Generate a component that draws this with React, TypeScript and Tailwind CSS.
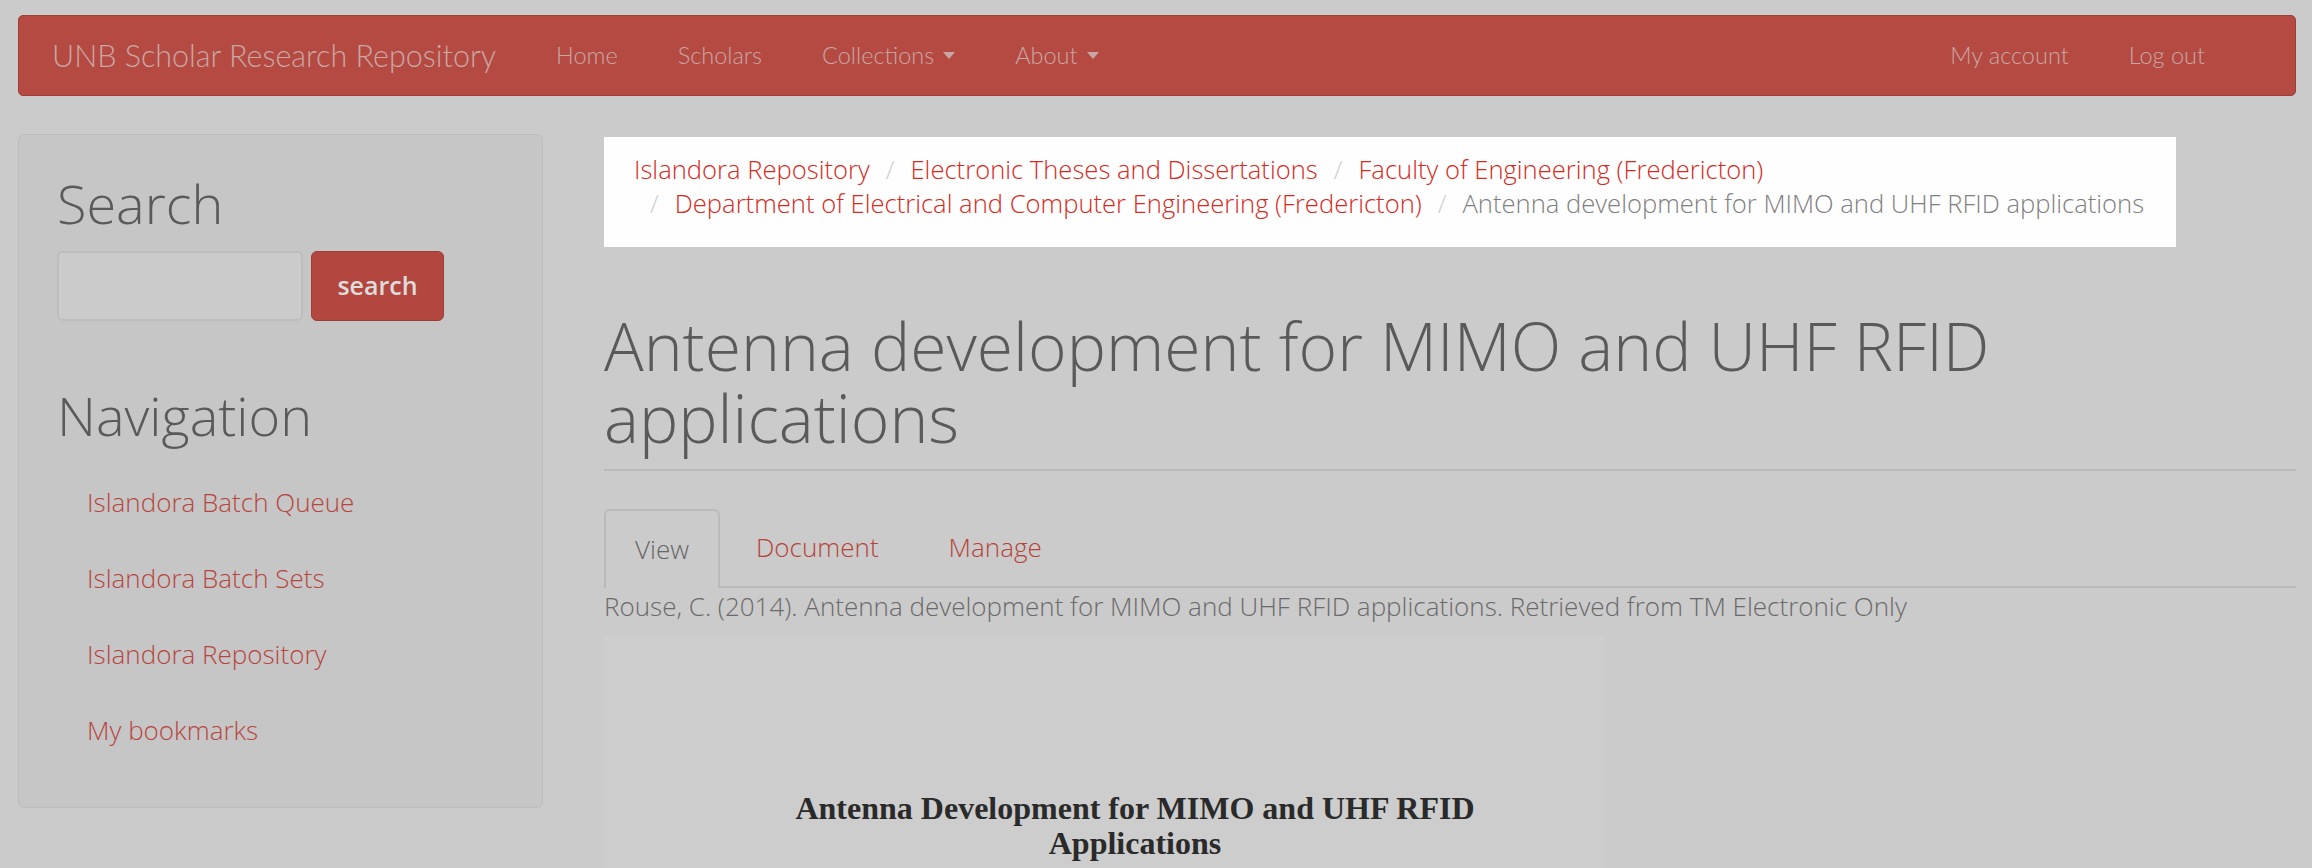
const navLinks = ['Islandora Batch Queue', 'Islandora Batch Sets', 'Islandora Repository', 'My bookmarks'];

const crumbs = [
  'Islandora Repository',
  'Electronic Theses and Dissertations',
  'Faculty of Engineering (Fredericton)',
  'Department of Electrical and Computer Engineering (Fredericton)',
];

const Caret = () => (
  <span className="ml-[9px] inline-block h-0 w-0 border-x-[6px] border-t-[7px] border-x-transparent border-t-[#c9a7a3] align-middle" />
);

export default function App() {
  return (
    <div className="h-[868px] overflow-hidden bg-[#cbcbcb] font-['Open_Sans',sans-serif]">
      {/* top bar */}
      <div className="pl-[18px] pr-[16px] pt-[15px]">
        <nav className="flex h-[81px] items-center rounded-[5px] border border-[#a03e38] bg-[#b54a43] pl-[33px] pr-[90px] font-['Lato',sans-serif] font-light text-[#c9a7a3]">
          <span className="text-[30.5px] leading-none">UNB Scholar Research Repository</span>
          <ul className="ml-[60px] flex items-center gap-[60px] text-[23.5px]">
            <li>Home</li>
            <li>Scholars</li>
            <li className="flex items-center">
              Collections
              <Caret />
            </li>
            <li className="flex items-center">
              About
              <Caret />
            </li>
          </ul>
          <ul className="ml-auto flex items-center gap-[60px] text-[23.5px]">
            <li>My account</li>
            <li>Log out</li>
          </ul>
        </nav>
      </div>

      <div className="flex items-start gap-[61px] pl-[18px] pr-[16px] pt-[38px]">
        {/* sidebar */}
        <aside className="w-[525px] shrink-0 rounded-[6px] border border-[#bdbdbd] bg-[#c6c6c6] pb-[39px] pl-[38px] pr-[30px] pt-[37px]">
          <h2 className="text-[54px] font-light leading-[62px] text-[#5a5a5a]">Search</h2>
          <div className="mt-[17px] flex gap-[8px]">
            <div className="h-[70px] w-[246px] rounded-[6px] border-2 border-[#bdbdbd] bg-[#cbcbcb]" />
            <button className="h-[70px] w-[133px] rounded-[6px] border border-[#9e3d37] bg-[#b3473f] text-[25px] font-semibold text-[#dcdcdc]">
              search
            </button>
          </div>
          <h2 className="mt-[63px] text-[54px] font-light leading-[62px] text-[#5a5a5a]">Navigation</h2>
          <ul className="mt-[18px]">
            {navLinks.map((l) => (
              <li key={l} className="py-[20px] pl-[30px] text-[26px] font-light leading-[36px] text-[#b8453e]">
                {l}
              </li>
            ))}
          </ul>
        </aside>

        {/* content */}
        <main className="min-w-0 flex-1">
          <ol className="mt-[3px] flex w-[1572px] flex-wrap bg-[#fefefe] pb-[26px] pl-[30px] pt-[16px] text-[25.6px] font-light leading-[34px]">
            {crumbs.map((c, i) => (
              <li key={c} className="flex">
                {i > 0 && <span className="px-[16px] text-[#cfcfcf]">/</span>}
                <span className="text-[#d8291c]">{c}</span>
              </li>
            ))}
            <li className="flex">
              <span className="px-[16px] text-[#cfcfcf]">/</span>
              <span className="text-[#808080]">Antenna development for MIMO and UHF RFID applications</span>
            </li>
          </ol>

          <h1 className="mt-[62px] border-b-2 border-[#bababa] pb-[16px] text-[66px] font-light leading-[72px] text-[#5a5a5a]">
            Antenna development for MIMO and UHF RFID applications
          </h1>

          <div className="mt-[38px] flex border-b-2 border-[#bababa] text-[26px] font-light leading-[33px]">
            <div className="-mb-[2px] w-[116px] rounded-t-[6px] border-2 border-b-0 border-[#bababa] bg-[#cbcbcb] py-[22px] text-center text-[#666666]">
              View
            </div>
            <div className="px-[36px] py-[22px] text-[#b8423a]">Document</div>
            <div className="px-[34px] py-[22px] text-[#b8423a]">Manage</div>
          </div>

          <p className="text-[26px] font-light leading-[36px] text-[#6a6a6a]">
            Rouse, C. (2014). Antenna development for MIMO and UHF RFID applications. Retrieved from TM Electronic Only
          </p>

          <div className="mt-[12px] h-[300px] w-[1000px] bg-[#cdcdcd] pl-[62px] pt-[155px] text-center font-['Liberation_Serif',serif] text-[32px] font-bold leading-[35px] text-[#2a2a2a]">
            <div>Antenna Development for MIMO and UHF RFID</div>
            <div>Applications</div>
          </div>
        </main>
      </div>
    </div>
  );
}
